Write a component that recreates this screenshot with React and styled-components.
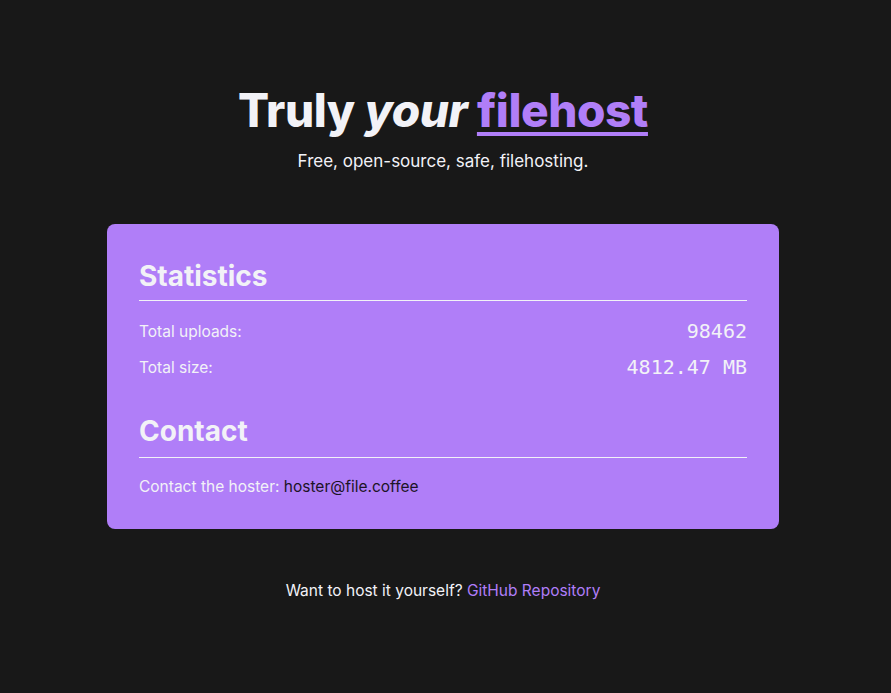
import React from 'react';
import styled, { createGlobalStyle } from 'styled-components';

const GlobalStyle = createGlobalStyle`
  html, body {
    margin: 0;
    padding: 0;
    background: #181818;
  }
  body {
    font-family: Inter, "Noto Sans", sans-serif;
    color: #f2f2f7;
  }
`;

const Page = styled.div`
  min-height: 100vh;
  display: flex;
  flex-direction: column;
  align-items: center;
  padding: 82px 5px 0 0;
  box-sizing: border-box;
`;

const Header = styled.header`
  display: flex;
  flex-direction: column;
  align-items: center;
  gap: 12px;
`;

const Title = styled.h1`
  margin: 0;
  font-size: 46px;
  font-weight: 800;
  letter-spacing: -0.01em;
  line-height: 56px;

  em {
    font-style: italic;
  }

  a {
    color: #b07ef8;
    text-decoration: underline;
    text-decoration-thickness: 4px;
    text-underline-offset: 5px;
  }
`;

const Subtitle = styled.p`
  margin: 0;
  font-size: 17px;
  line-height: 22px;
`;

const Card = styled.main`
  width: 672px;
  margin-top: 52px;
  padding: 32px 32px 31px;
  box-sizing: border-box;
  background: #b07ef8;
  border-radius: 8px;
`;

const SectionTitle = styled.h2`
  margin: ${(p) => (p.$first ? '2px' : '28px')} 0 0;
  padding-bottom: ${(p) => (p.$first ? '6px' : '8px')};
  font-size: 28px;
  font-weight: 700;
  line-height: 36px;
  border-bottom: 1px solid #f2f2f7;
`;

const StatRow = styled.div`
  display: flex;
  justify-content: space-between;
  align-items: center;
  height: 36px;
  margin-top: ${(p) => (p.$first ? '12px' : '0')};
`;

const Label = styled.span`
  font-size: 15.5px;
`;

const Value = styled.span`
  font-family: "DejaVu Sans Mono", "Liberation Mono", monospace;
  font-size: 20px;
`;

const ContactLine = styled.p`
  margin: 18px 0 0;
  font-size: 15.5px;
  line-height: 22px;

  a {
    color: #1c1426;
    text-decoration: none;
  }
`;

const Footer = styled.footer`
  margin-top: 52px;
  font-size: 15.5px;

  a {
    color: #b07ef8;
    text-decoration: none;
  }
`;

const App = () => {
  const stats = [
    { label: 'Total uploads:', value: '98462' },
    { label: 'Total size:', value: '4812.47 MB' },
  ];

  return (
    <>
      <GlobalStyle />
      <Page>
        <Header>
          <Title>
            Truly <em>your</em> <a href="#">filehost</a>
          </Title>
          <Subtitle>Free, open-source, safe, filehosting.</Subtitle>
        </Header>
        <Card>
          <SectionTitle $first>Statistics</SectionTitle>
          {stats.map((s, i) => (
            <StatRow key={s.label} $first={i === 0}>
              <Label>{s.label}</Label>
              <Value>{s.value}</Value>
            </StatRow>
          ))}
          <SectionTitle>Contact</SectionTitle>
          <ContactLine>
            Contact the hoster: <a href="mailto:hoster@file.coffee">hoster@file.coffee</a>
          </ContactLine>
        </Card>
        <Footer>
          Want to host it yourself? <a href="#">GitHub Repository</a>
        </Footer>
      </Page>
    </>
  );
};

export default App;
